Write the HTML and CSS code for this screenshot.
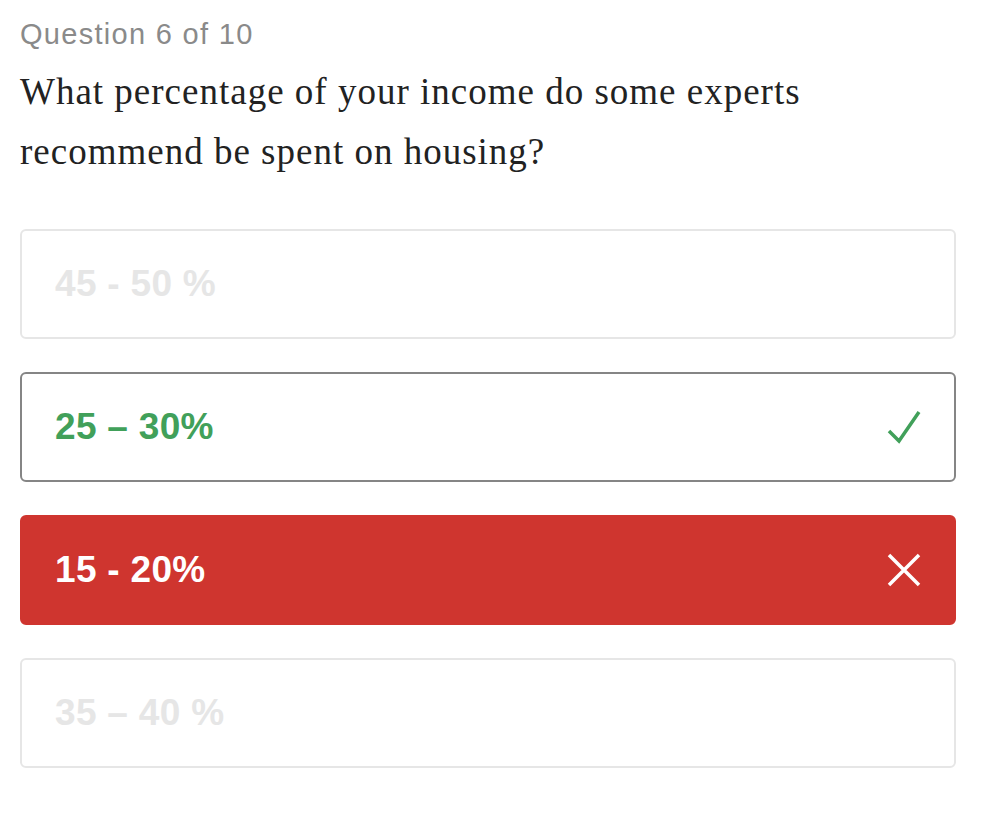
FILE: index.html
```html
<!DOCTYPE html>
<html>
    <head>
        <title>Quiz</title>
        <meta charset="UTF-8">
        <meta name="viewport" content="width=device-width, initial-scale=1">
        <link rel="stylesheet" href="styles.css">
    </head>
    <body>
        <div id="quiz">
            <p id="counter">Question 6 of 10</p>
            <h2 id="question">What percentage of your income do some experts recommend be spent on housing?</h2>

            <div id="answers">
                <div class="answer disabled"><span>45 - 50 %</span></div>
                <div class="answer correct">
                    <span>25 – 30%</span>
                    <svg class="icon" width="34" height="34" viewBox="0 0 34 34"><path d="M2 21 L12 31 L32 2" fill="none" stroke="#41a05a" stroke-width="3.5"/></svg>
                </div>
                <div class="answer wrong">
                    <span>15 - 20%</span>
                    <svg class="icon" width="34" height="34" viewBox="0 0 34 34"><path d="M2 2 L32 32 M32 2 L2 32" fill="none" stroke="#fff" stroke-width="3.5"/></svg>
                </div>
                <div class="answer disabled"><span>35 – 40 %</span></div>
            </div>
        </div>
    </body>
</html>
```

FILE: styles.css
```css
html {
    background-color: white;
}

body {
    margin: 0;
    padding: 14px 26px 0 20px;
}

#counter {
    margin: 0;
    font-family: "Liberation Sans", Arial, sans-serif;
    font-size: 29px;
    letter-spacing: 1.3px;
    line-height: 40px;
    color: #8a8a8a;
}

#question {
    margin: 8px 0 0 0;
    font-family: "Liberation Serif", "Times New Roman", serif;
    font-weight: normal;
    font-size: 37px;
    letter-spacing: 1px;
    line-height: 60px;
    color: #222;
    max-width: 840px;
}

#answers {
    display: flex;
    flex-direction: column;
    gap: 33px;
    margin-top: 47px;
}

.answer {
    height: 110px;
    box-sizing: border-box;
    border-radius: 6px;
    border: 2px solid #e6e6e6;
    padding: 0 33px;
    display: flex;
    align-items: center;
    justify-content: space-between;
    font-family: "Liberation Sans", Arial, sans-serif;
    font-weight: bold;
    font-size: 37px;
    letter-spacing: 0.3px;
}

.disabled {
    color: #e6e6e6;
}

.correct {
    border-color: #858585;
    color: #41a05a;
}

.wrong {
    background-color: #cf352f;
    border-color: #cf352f;
    color: white;
}

.icon {
    display: block;
}
```
